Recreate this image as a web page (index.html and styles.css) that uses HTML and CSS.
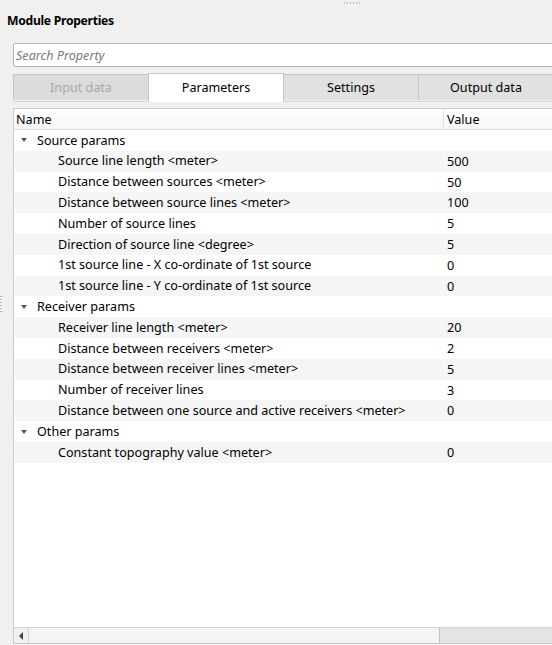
FILE: index.html
```html
<!DOCTYPE html>
<html>
<head>
<meta charset="utf-8">
<link rel="stylesheet" href="styles.css">
</head>
<body>
<div class="panel">
  <div class="grip-top"></div>
  <div class="grip-left"></div>
  <div class="title">Module Properties</div>
  <div class="search"><span class="placeholder">Search Property</span></div>
  <div class="tabs">
    <div class="tab disabled">Input data</div>
    <div class="tab active">Parameters</div>
    <div class="tab">Settings</div>
    <div class="tab">Output data</div>
  </div>
  <div class="tree">
    <div class="head">
      <div class="col-name">Name</div>
      <div class="col-value">Value</div>
    </div>
    <div class="rows">
      <div class="row group"><div class="col-name"><span class="arrow"></span>Source params</div><div class="col-value"></div></div>
      <div class="row alt"><div class="col-name child">Source line length &lt;meter&gt;</div><div class="col-value">500</div></div>
      <div class="row"><div class="col-name child">Distance between sources &lt;meter&gt;</div><div class="col-value">50</div></div>
      <div class="row alt"><div class="col-name child">Distance between source lines &lt;meter&gt;</div><div class="col-value">100</div></div>
      <div class="row"><div class="col-name child">Number of source lines</div><div class="col-value">5</div></div>
      <div class="row alt"><div class="col-name child">Direction of source line &lt;degree&gt;</div><div class="col-value">5</div></div>
      <div class="row"><div class="col-name child">1st source line - X co-ordinate of 1st source</div><div class="col-value">0</div></div>
      <div class="row alt"><div class="col-name child">1st source line - Y co-ordinate of 1st source</div><div class="col-value">0</div></div>
      <div class="row group"><div class="col-name"><span class="arrow"></span>Receiver params</div><div class="col-value"></div></div>
      <div class="row alt"><div class="col-name child">Receiver line length &lt;meter&gt;</div><div class="col-value">20</div></div>
      <div class="row"><div class="col-name child">Distance between receivers &lt;meter&gt;</div><div class="col-value">2</div></div>
      <div class="row alt"><div class="col-name child">Distance between receiver lines &lt;meter&gt;</div><div class="col-value">5</div></div>
      <div class="row"><div class="col-name child">Number of receiver lines</div><div class="col-value">3</div></div>
      <div class="row alt"><div class="col-name child">Distance between one source and active receivers &lt;meter&gt;</div><div class="col-value">0</div></div>
      <div class="row group"><div class="col-name"><span class="arrow"></span>Other params</div><div class="col-value"></div></div>
      <div class="row alt"><div class="col-name child">Constant topography value &lt;meter&gt;</div><div class="col-value">0</div></div>
    </div>
    <div class="hscroll">
      <div class="sb-arrow"><span class="tri-left"></span></div>
      <div class="sb-thumb"></div>
      <div class="sb-track"></div>
    </div>
  </div>
</div>
</body>
</html>
```

FILE: styles.css
```css
html, body {
  margin: 0;
  padding: 0;
  background: #f0f0f0;
  overflow: hidden;
}
body {
  width: 552px;
  height: 645px;
  font-family: "Noto Sans", "Open Sans", sans-serif;
  font-size: 12.6px;
  color: #000;
}
.panel {
  position: relative;
  height: 645px;
  display: flex;
  flex-direction: column;
}
.grip-top {
  position: absolute;
  left: 343px;
  top: 2px;
  width: 18px;
  height: 2px;
  background-image: radial-gradient(circle, #b8b8b8 0.8px, transparent 1px);
  background-size: 3px 2px;
}
.grip-left {
  position: absolute;
  left: 0;
  top: 295px;
  width: 2px;
  height: 18px;
  background-image: radial-gradient(circle, #b8b8b8 0.8px, transparent 1px);
  background-size: 2px 3px;
}
.title {
  font-weight: bold;
  font-size: 12.2px;
  margin: 11px 0 0 7px;
  height: 20px;
  line-height: 20px;
  letter-spacing: -0.3px;
}
.search {
  margin: 12px 0 0 13px;
  width: 560px;
  height: 22px;
  background: #fff;
  border: 1px solid #b4b4b4;
  border-radius: 2px;
  display: flex;
  align-items: center;
}
.placeholder {
  font-style: italic;
  color: #7a7a7a;
  padding-left: 2px;
}
.tabs {
  margin: 6px 0 0 13px;
  display: flex;
  align-items: flex-end;
  height: 28px;
  border-bottom: 1px solid #d6d6d6;
  width: 560px;
}
.tab {
  flex: 0 0 auto;
  width: 134px;
  height: 25px;
  line-height: 26px;
  text-align: center;
  background: #e1e1e1;
  border: 1px solid #c4c4c4;
  border-bottom: none;
  margin-bottom: 1px;
}
.tab + .tab {
  margin-left: -1px;
}
.tab.disabled {
  color: #a8a8a8;
  background: #dcdcdc;
}
.tab.active {
  background: #ffffff;
  height: 28px;
  line-height: 28px;
  margin-bottom: 0;
  border-color: #c8c8c8;
  position: relative;
  top: 1px;
}
.tree {
  margin: 6px 0 0 13px;
  width: 560px;
  flex: 1 1 auto;
  background: #fff;
  border: 1px solid #cacaca;
  border-right: none;
  display: flex;
  flex-direction: column;
  margin-bottom: 1px;
}
.head {
  display: flex;
  height: 20px;
  line-height: 21px;
  background: linear-gradient(#ffffff, #f6f6f6);
  border-bottom: 1px solid #e0e0e0;
}
.head .col-name {
  width: 427px;
  padding-left: 2px;
  border-right: 1px solid #e0e0e0;
}
.head .col-value {
  padding-left: 3px;
}
.rows {
  flex: 1 1 auto;
  padding-left: 1px;
}
.row {
  display: flex;
  height: 20.8px;
  line-height: 21.6px;
  background: #ffffff;
}
.row.alt {
  background: #f5f5f5;
}
.row .col-name {
  width: 430px;
  white-space: nowrap;
  display: flex;
  align-items: center;
}
.row .col-name.child {
  padding-left: 43px;
  width: 387px;
}
.row .col-value {
  padding-left: 2px;
}
.group .col-name {
  padding-left: 6px;
  width: 424px;
}
.arrow {
  width: 0;
  height: 0;
  border-left: 3.5px solid transparent;
  border-right: 3.5px solid transparent;
  border-top: 4px solid #555;
  margin-right: 10px;
}
.hscroll {
  height: 15px;
  border-top: 1px solid #d4d4d4;
  display: flex;
  background: #e5e5e5;
}
.sb-arrow {
  width: 14px;
  display: flex;
  align-items: center;
  justify-content: center;
  background: #f0f0f0;
  border-right: 1px solid #d6d6d6;
}
.tri-left {
  width: 0;
  height: 0;
  border-top: 4px solid transparent;
  border-bottom: 4px solid transparent;
  border-right: 4px solid #404040;
}
.sb-thumb {
  width: 410px;
  background: #f4f4f4;
  border-right: 1px solid #c4c4c4;
}
.sb-track {
  flex: 1 1 auto;
  background: #e4e4e4;
}
```
